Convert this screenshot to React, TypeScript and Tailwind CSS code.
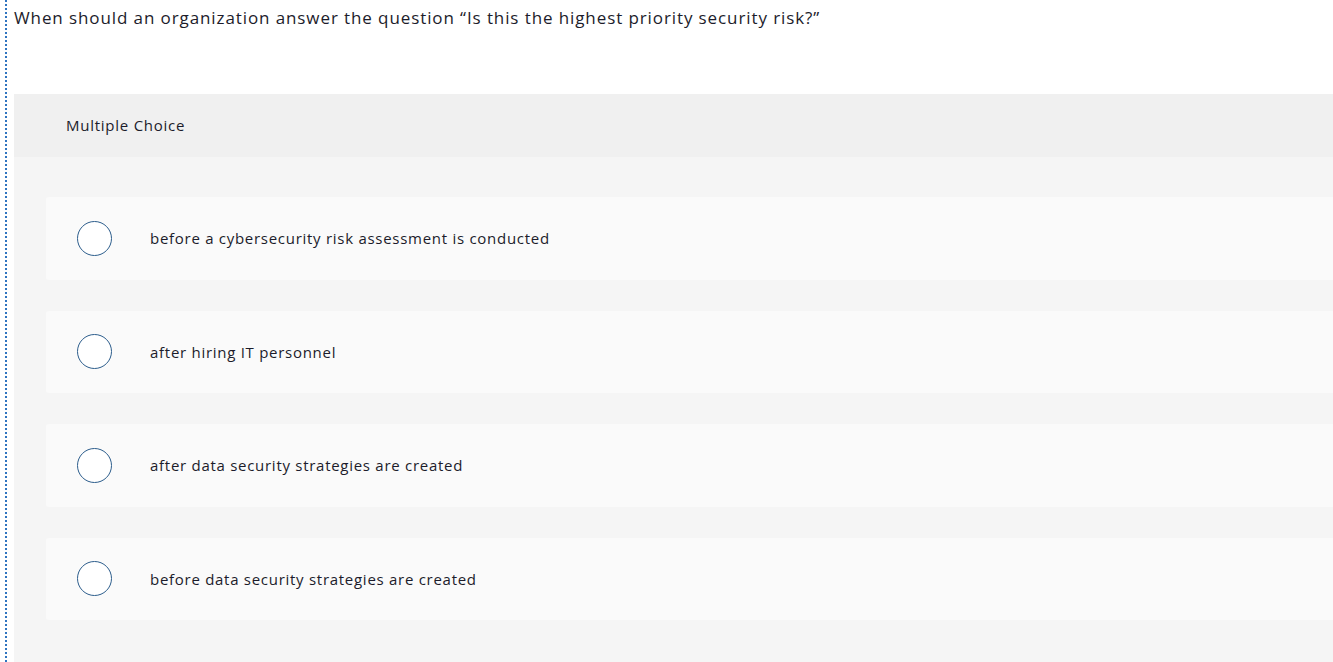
const options = [
  "before a cybersecurity risk assessment is conducted",
  "after hiring IT personnel",
  "after data security strategies are created",
  "before data security strategies are created",
];

function Radio() {
  return (
    <span className="block w-[35px] h-[35px] rounded-full border-[1.5px] border-[#2c5d8c] bg-white shrink-0" />
  );
}

export default function App() {
  return (
    <div
      className="min-h-screen bg-white text-[#1c1c2b]"
      style={{ fontFamily: '"Open Sans", "Liberation Sans", sans-serif' }}
    >
      <div className="ml-[5px] border-l-2 border-dotted border-[#2f74c0] pl-[7px] min-h-screen">
        <p className="pt-[6px] text-[17px] leading-[24px] tracking-[0.9px]">
          When should an organization answer the question “Is this the highest priority security risk?”
        </p>
        <div className="mt-[64px]">
          <div className="h-[63px] bg-[#f0f0f0] flex items-center pl-[52px] text-[15px] tracking-[0.75px]">
            Multiple Choice
          </div>
          <div className="bg-[#f5f5f5] pt-[40px] pb-[42px] pl-[32px] flex flex-col gap-[31px]">
            {options.map((opt) => (
              <div
                key={opt}
                className="h-[82.5px] bg-[#fafafa] rounded-l-[3px] flex items-center pl-[31px]"
              >
                <Radio />
                <span className="ml-[38px] text-[15px] tracking-[0.72px]">{opt}</span>
              </div>
            ))}
          </div>
        </div>
      </div>
    </div>
  );
}
